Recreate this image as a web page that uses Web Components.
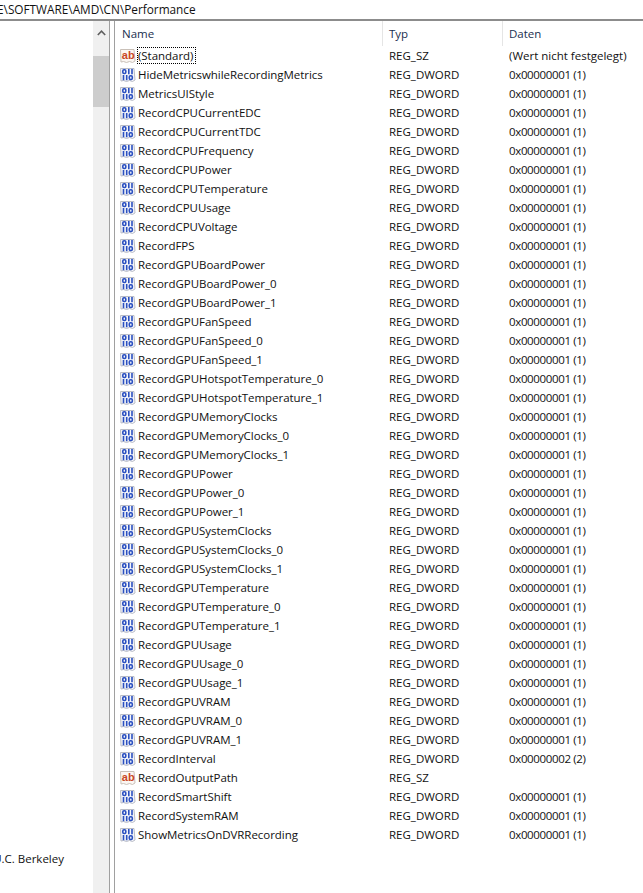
<!DOCTYPE html>
<html>
<head>
<meta charset="utf-8">
<style>
  html, body { margin: 0; height: 100%; overflow: hidden; background: #fff; }
  body { font: 11.5px "Open Sans", "Noto Sans", sans-serif; color: #111; }
</style>
</head>
<body>
<regedit-window></regedit-window>

<template id="dword-icon">
  <svg width="16" height="16" viewBox="0 0 16 16">
    <path d="M.5 1.500h13.500l1 11.500-2.500 1.500-3-1-3 1-3-1-2.500.5z" fill="#f4f5fa" stroke="#b9bcc6"/>
    <g fill="none" stroke="#2b50c0" stroke-width="1.600">
      <rect x="2.800" y="2.800" width="3" height="3.700" rx="1.200"/>
      <path d="M8.800 2v5.200M12 2v5.200"/>
      <path d="M3.500 8v5.200M6.700 8v5.200"/>
      <rect x="9.300" y="8.800" width="3" height="3.700" rx="1.200"/>
    </g>
  </svg>
</template>

<template id="string-icon">
  <svg width="16" height="16" viewBox="0 0 16 16">
    <path d="M.5 1.500h13.500l1 11.500-2.500 1.500-3-1-3 1-3-1-2.500.5z" fill="#fbf6f2" stroke="#c9c0b8"/>
    <text x="1.800" y="10.500" font-family="Liberation Sans" font-weight="700" font-size="11" fill="#c9471f">ab</text>
  </svg>
</template>

<script>
  const REGISTRY_VALUES = [
    ['(Standard)', 'REG_SZ', '(Wert nicht festgelegt)'],
    ['HideMetricswhileRecordingMetrics'],
    ['MetricsUIStyle'],
    ['RecordCPUCurrentEDC'],
    ['RecordCPUCurrentTDC'],
    ['RecordCPUFrequency'],
    ['RecordCPUPower'],
    ['RecordCPUTemperature'],
    ['RecordCPUUsage'],
    ['RecordCPUVoltage'],
    ['RecordFPS'],
    ['RecordGPUBoardPower'],
    ['RecordGPUBoardPower_0'],
    ['RecordGPUBoardPower_1'],
    ['RecordGPUFanSpeed'],
    ['RecordGPUFanSpeed_0'],
    ['RecordGPUFanSpeed_1'],
    ['RecordGPUHotspotTemperature_0'],
    ['RecordGPUHotspotTemperature_1'],
    ['RecordGPUMemoryClocks'],
    ['RecordGPUMemoryClocks_0'],
    ['RecordGPUMemoryClocks_1'],
    ['RecordGPUPower'],
    ['RecordGPUPower_0'],
    ['RecordGPUPower_1'],
    ['RecordGPUSystemClocks'],
    ['RecordGPUSystemClocks_0'],
    ['RecordGPUSystemClocks_1'],
    ['RecordGPUTemperature'],
    ['RecordGPUTemperature_0'],
    ['RecordGPUTemperature_1'],
    ['RecordGPUUsage'],
    ['RecordGPUUsage_0'],
    ['RecordGPUUsage_1'],
    ['RecordGPUVRAM'],
    ['RecordGPUVRAM_0'],
    ['RecordGPUVRAM_1'],
    ['RecordInterval', 'REG_DWORD', '0x00000002 (2)'],
    ['RecordOutputPath', 'REG_SZ', ''],
    ['RecordSmartShift'],
    ['RecordSystemRAM'],
    ['ShowMetricsOnDVRRecording'],
  ];

  class RegValue extends HTMLElement {
    constructor() {
      super();
      this.attachShadow({ mode: 'open' });
    }

    connectedCallback() {
      const type = this.getAttribute('type');
      const data = this.getAttribute('data');
      const icon = document.getElementById(type === 'REG_SZ' ? 'string-icon' : 'dword-icon');
      this.shadowRoot.innerHTML = `
        <style>
          :host { display: grid; grid-template-columns: 274px 120px 1fr; height: 19px; line-height: 19px; white-space: nowrap; }
          .name { display: flex; align-items: center; gap: 1px; padding-left: 5px; }
          .icon { display: block; width: 16px; height: 16px; }
          .label { padding: 0 1px; line-height: 17px; letter-spacing: -.04px; }
          :host([focused]) .label { outline: 1px dotted #000; outline-offset: -1px; padding: 0 3px 0 1px; }
          .hex { letter-spacing: -.36px; }
        </style>
        <div class="name"><span class="icon"></span><span class="label"><slot></slot></span></div>
        <div>${type}</div>
        <div class="${data.startsWith('0x') ? 'hex' : ''}">${data}</div>
      `;
      this.shadowRoot.querySelector('.icon').appendChild(icon.content.cloneNode(true));
    }
  }

  class ValueList extends HTMLElement {
    constructor() {
      super();
      this.attachShadow({ mode: 'open' });
      this.shadowRoot.innerHTML = `
        <style>
          :host { display: block; flex: 1; border-left: 1px solid #a0a0a0; min-width: 0; }
          header { display: grid; grid-template-columns: 261px 120px 1fr; height: 25px; line-height: 26px; color: #1a3050; padding-left: 7px; }
          header span { border-right: 1px solid #e5e5e5; height: 25px; }
          header span:last-child { border: 0; }
          header span + span { padding-left: 6px; }
        </style>
        <header><span>Name</span><span>Typ</span><span>Daten</span></header>
        <slot></slot>
      `;
    }
  }

  class TreeScrollbar extends HTMLElement {
    constructor() {
      super();
      this.attachShadow({ mode: 'open' });
      this.shadowRoot.innerHTML = `
        <style>
          :host { display: flex; flex-direction: column; width: 16px; background: #f0f0f0; flex: none; }
          .arrow { height: 17px; display: flex; align-items: center; justify-content: center; margin-top: 3px; }
          .thumb { height: 51px; margin-top: 15px; background: #cdcdcd; }
        </style>
        <div class="arrow"><svg width="9" height="6" viewBox="0 0 9 6"><path d="M.8 5L4.500 1.200 8.200 5" fill="none" stroke="#606060" stroke-width="1.600"/></svg></div>
        <div class="thumb"></div>
      `;
    }
  }

  class TreePane extends HTMLElement {
    constructor() {
      super();
      this.attachShadow({ mode: 'open' });
      this.shadowRoot.innerHTML = `
        <style>
          :host { display: flex; width: 110px; flex: none; border-right: 1px solid #a0a0a0; box-sizing: border-box; margin-right: 4px; }
          .tree { flex: 1; min-width: 0; overflow: hidden; display: flex; align-items: flex-end; justify-content: flex-end; padding: 0 29px 27px 0; white-space: nowrap; }
          .tree span { flex: none; }
        </style>
        <div class="tree"><span><slot></slot></span></div>
        <tree-scrollbar></tree-scrollbar>
      `;
    }
  }

  class AddressBar extends HTMLElement {
    constructor() {
      super();
      this.attachShadow({ mode: 'open' });
      this.shadowRoot.innerHTML = `
        <style>
          :host { display: block; height: 19px; line-height: 18px; border-bottom: 2px solid #8c8c8c; overflow: hidden; white-space: nowrap; font-size: 11.800px; }
          span { display: block; margin-left: -3px; }
        </style>
        <span><slot></slot></span>
      `;
    }
  }

  class RegeditWindow extends HTMLElement {
    constructor() {
      super();
      this.attachShadow({ mode: 'open' });
      this.shadowRoot.innerHTML = `
        <style>
          :host { display: flex; flex-direction: column; height: 893px; }
          .panes { display: flex; flex: 1; min-height: 0; }
        </style>
        <address-bar>E\\SOFTWARE\\AMD\\CN\\Performance</address-bar>
        <div class="panes">
          <tree-pane>U.C. Berkeley</tree-pane>
          <value-list></value-list>
        </div>
      `;
      const list = this.shadowRoot.querySelector('value-list');
      REGISTRY_VALUES.forEach(([name, type = 'REG_DWORD', data = '0x00000001 (1)'], i) => {
        const row = document.createElement('reg-value');
        row.setAttribute('type', type);
        row.setAttribute('data', data);
        if (i === 0) row.setAttribute('focused', '');
        row.textContent = name;
        list.appendChild(row);
      });
    }
  }

  customElements.define('reg-value', RegValue);
  customElements.define('value-list', ValueList);
  customElements.define('tree-scrollbar', TreeScrollbar);
  customElements.define('tree-pane', TreePane);
  customElements.define('address-bar', AddressBar);
  customElements.define('regedit-window', RegeditWindow);
</script>
</body>
</html>
